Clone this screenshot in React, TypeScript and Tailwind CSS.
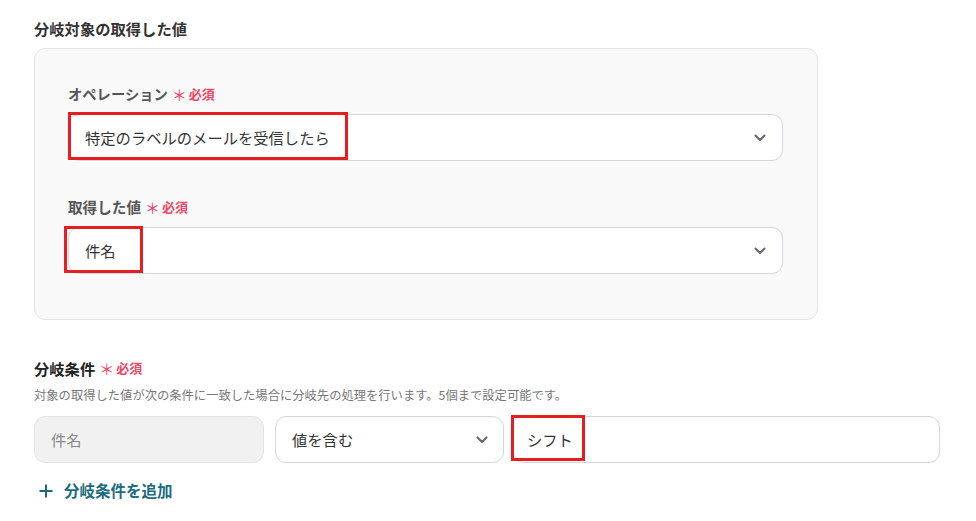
import React from "react";

const font = { fontFamily: '"Noto Sans CJK JP", "Noto Sans", sans-serif' };

function Chevron() {
  return (
    <svg width="12" height="8" viewBox="0 0 12 8" fill="none" className="shrink-0">
      <path d="M1.5 1.5 L6 6 L10.5 1.5" stroke="#666" strokeWidth="2" strokeLinecap="round" strokeLinejoin="round" />
    </svg>
  );
}

function Required() {
  return (
    <span className="ml-[4px] inline-flex items-center text-[13px] font-bold text-[#ef4763]">
      <span className="mr-[2px] text-[15px] font-normal leading-none">＊</span>必須
    </span>
  );
}

export default function App() {
  return (
    <div className="min-h-[521px] w-[976px] bg-white" style={font}>
      <div className="w-[940px] pl-[34px] pt-[17px]">
        <div className="text-[15.3px] font-bold leading-[22px] text-[#333]">分岐対象の取得した値</div>

        <div className="mt-[9px] w-[784px] rounded-[11px] border border-[#e2e4e8] bg-[#f9f9fa] pb-[45px] pl-[33px] pr-[34px] pt-[35px]">
          <div className="flex h-[20px] items-center text-[14.3px] font-bold text-[#555]">
            オペレーション
            <Required />
          </div>
          <div className="relative mt-[10px] flex h-[47px] items-center justify-between rounded-[11px] border border-[#d3d6dc] bg-white pl-[16px] pr-[16px]">
            <span className="text-[15.3px] text-[#333]">特定のラベルのメールを受信したら</span>
            <Chevron />
            <div className="pointer-events-none absolute left-[-1px] top-[-3px] h-[48px] w-[280px] border-[3px] border-[#e41e21]" />
          </div>

          <div className="mt-[36px] flex h-[20px] items-center text-[14.6px] font-bold text-[#555]">
            取得した値
            <Required />
          </div>
          <div className="relative mt-[10px] flex h-[47px] items-center justify-between rounded-[11px] border border-[#d3d6dc] bg-white pl-[16px] pr-[16px]">
            <span className="text-[15.3px] text-[#333]">件名</span>
            <Chevron />
            <div className="pointer-events-none absolute left-[-5px] top-[-2px] h-[47px] w-[79px] border-[3px] border-[#e41e21]" />
          </div>
        </div>

        <div className="mt-[38px] flex h-[20px] items-center text-[15.3px] font-bold text-[#222]">
          分岐条件
          <Required />
        </div>
        <div className="mt-[8px] text-[12.3px] leading-[18px] text-[#777]">
          対象の取得した値が次の条件に一致した場合に分岐先の処理を行います。5個まで設定可能です。
        </div>

        <div className="mt-[12px] flex h-[47px]">
          <div className="flex w-[230px] items-center rounded-[11px] border border-[#e2e4e8] bg-[#f1f1f1] pl-[16px]">
            <span className="text-[15.3px] text-[#888]">件名</span>
          </div>
          <div className="ml-[11px] flex w-[229px] items-center justify-between rounded-[11px] border border-[#d3d6dc] bg-white pl-[16px] pr-[15px]">
            <span className="text-[15.3px] text-[#333]">値を含む</span>
            <Chevron />
          </div>
          <div className="relative ml-[8px] flex w-[428px] items-center rounded-[11px] border border-[#d3d6dc] bg-white pl-[14px]">
            <span className="text-[15.3px] text-[#333]">シフト</span>
            <div className="pointer-events-none absolute left-[-2px] top-[-2px] h-[46px] w-[74px] border-[3px] border-[#e41e21]" />
          </div>
        </div>

        <div className="mt-[18px] flex h-[20px] items-center text-[15.5px] font-bold text-[#1c6a80]">
          <svg width="16" height="16" viewBox="0 0 16 16" className="ml-[4px] mr-[10px]">
            <path d="M8 1.5 V14.5 M1.5 8 H14.5" stroke="#1c6a80" strokeWidth="2" strokeLinecap="butt" />
          </svg>
          分岐条件を追加
        </div>
      </div>
    </div>
  );
}
